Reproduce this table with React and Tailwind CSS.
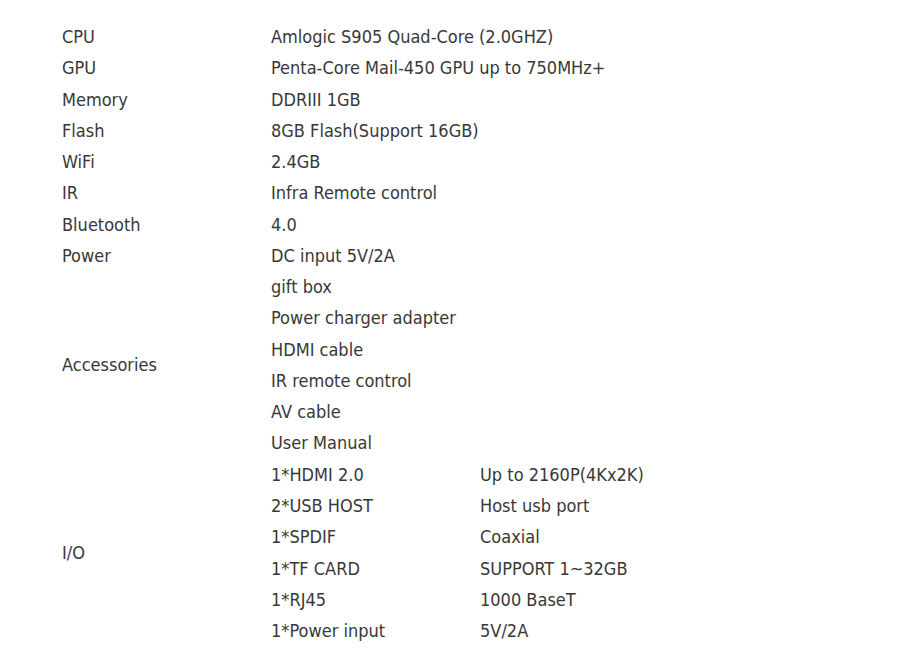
export default function App() {
  const rows = [
    ["CPU", "Amlogic S905 Quad-Core (2.0GHZ)"],
    ["GPU", "Penta-Core Mail-450 GPU up to 750MHz+"],
    ["Memory", "DDRIII 1GB"],
    ["Flash", "8GB Flash(Support 16GB)"],
    ["WiFi", "2.4GB"],
    ["IR", "Infra Remote control"],
    ["Bluetooth", "4.0"],
    ["Power", "DC input 5V/2A"],
  ];
  const acc = ["gift box", "Power charger adapter", "HDMI cable", "IR remote control", "AV cable", "User Manual"];
  const io = [
    ["1*HDMI 2.0", "Up to 2160P(4Kx2K)"],
    ["2*USB HOST", "Host usb port"],
    ["1*SPDIF", "Coaxial"],
    ["1*TF CARD", "SUPPORT 1~32GB"],
    ["1*RJ45", "1000 BaseT"],
    ["1*Power input", "5V/2A"],
  ];
  const td = "p-0 h-[31.27px] align-middle whitespace-nowrap";
  return (
    <div className="w-[900px] h-[653px] bg-white overflow-hidden pt-[21px] pl-[62px] text-[#383838] text-[18px] leading-[31.27px]" style={{ fontFamily: '"DejaVu Sans Condensed", Tahoma, "DejaVu Sans", sans-serif' }}>
      <table className="border-collapse">
        <colgroup>
          <col className="w-[209px]" />
          <col className="w-[209px]" />
          <col className="w-[250px]" />
        </colgroup>
        <tbody>
          {rows.map(([a, b]) => (
            <tr key={a}>
              <td className={td}>{a}</td>
              <td className={td} colSpan={2}>{b}</td>
            </tr>
          ))}
          {acc.map((b, i) => (
            <tr key={b}>
              {i === 0 && <td className={td} rowSpan={6}>Accessories</td>}
              <td className={td} colSpan={2}>{b}</td>
            </tr>
          ))}
          {io.map(([b, c], i) => (
            <tr key={b}>
              {i === 0 && <td className={td} rowSpan={6}>I/O</td>}
              <td className={td}>{b}</td>
              <td className={td}>{c}</td>
            </tr>
          ))}
        </tbody>
      </table>
    </div>
  );
}
